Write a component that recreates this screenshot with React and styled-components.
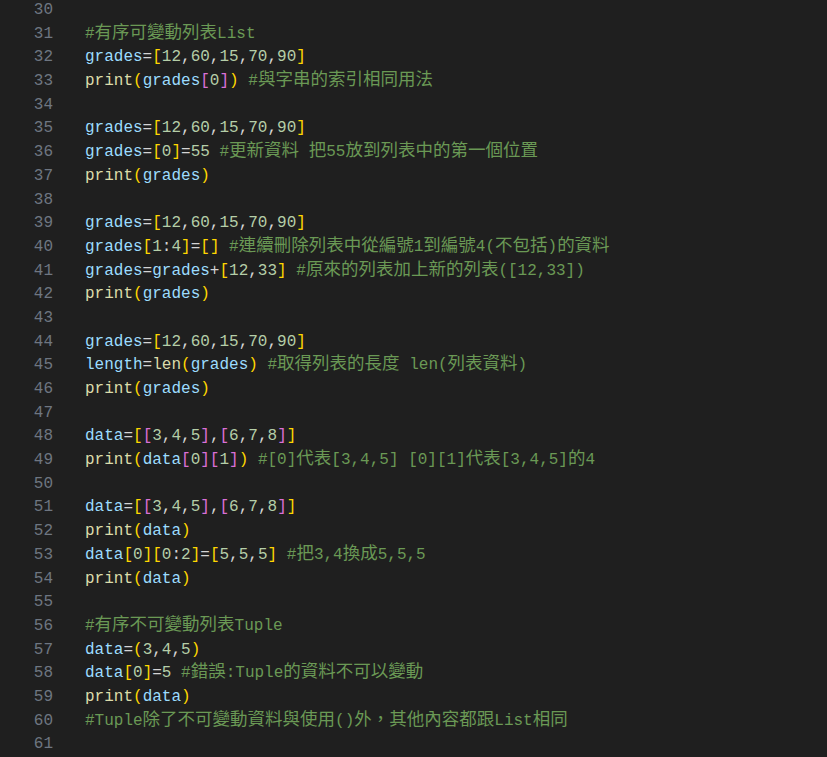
import React from 'react'
import styled, { createGlobalStyle } from 'styled-components'

const GlobalStyle = createGlobalStyle`
    html, body {
        margin: 0;
        padding: 0;
        background: #1f1f1f;
        overflow: hidden;
    }
`

const Editor = styled.div`
    width: 827px;
    height: 757px;
    overflow: hidden;
    background: #1f1f1f;
    font-family: "Liberation Mono", "DejaVu Sans Mono", "Noto Sans CJK TC", monospace;
    font-size: 16px;
`
const Lines = styled.div`
    margin-top: -1px;
    display: flex;
    flex-direction: column;
`
const Row = styled.div`
    display: flex;
    height: 23.7px;
    line-height: 23.7px;
    white-space: pre;
`
const LineNo = styled.span`
    width: 53px;
    flex: none;
    text-align: right;
    color: #6e7681;
`
const Code = styled.span`
    padding-left: 32px;
    color: #d4d4d4;
`
const Token = styled.span`
    color: ${p => p.$color};
`
const Wide = styled.span`
    font-family: "Noto Sans CJK TC", "Noto Sans CJK SC", sans-serif;
    font-size: 17.5px;
    line-height: 0;
`

const colors = {
    v: '#9cdcfe',
    f: '#dcdcaa',
    n: '#b5cea8',
    o: '#d4d4d4',
    c: '#6a9955',
}
const bracketColors = ['#ffd700', '#da70d6', '#179fff']

const source = [
    '',
    '#有序可變動列表List',
    'grades=[12,60,15,70,90]',
    'print(grades[0]) #與字串的索引相同用法',
    '',
    'grades=[12,60,15,70,90]',
    'grades=[0]=55 #更新資料 把55放到列表中的第一個位置',
    'print(grades)',
    '',
    'grades=[12,60,15,70,90]',
    'grades[1:4]=[] #連續刪除列表中從編號1到編號4(不包括)的資料',
    'grades=grades+[12,33] #原來的列表加上新的列表([12,33])',
    'print(grades)',
    '',
    'grades=[12,60,15,70,90]',
    'length=len(grades) #取得列表的長度 len(列表資料)',
    'print(grades)',
    '',
    'data=[[3,4,5],[6,7,8]]',
    'print(data[0][1]) #[0]代表[3,4,5] [0][1]代表[3,4,5]的4',
    '',
    'data=[[3,4,5],[6,7,8]]',
    'print(data)',
    'data[0][0:2]=[5,5,5] #把3,4換成5,5,5',
    'print(data)',
    '',
    '#有序不可變動列表Tuple',
    'data=(3,4,5)',
    'data[0]=5 #錯誤:Tuple的資料不可以變動',
    'print(data)',
    '#Tuple除了不可變動資料與使用()外，其他內容都跟List相同',
    '',
]

// rough python tokenizer, enough for this snippet
const tokenize = line => {
    const out = []
    let depth = 0
    let i = 0
    while (i < line.length) {
        const rest = line.slice(i)
        let m
        if (rest[0] === '#') {
            out.push(['c', rest])
            break
        } else if ((m = rest.match(/^[A-Za-z_]\w*/))) {
            const next = line[i + m[0].length]
            out.push([next === '(' ? 'f' : 'v', m[0]])
            i += m[0].length
        } else if ((m = rest.match(/^\d+/))) {
            out.push(['n', m[0]])
            i += m[0].length
        } else if ('([{'.includes(rest[0])) {
            out.push([bracketColors[depth % 3], rest[0]])
            depth++
            i++
        } else if (')]}'.includes(rest[0])) {
            depth--
            out.push([bracketColors[depth % 3], rest[0]])
            i++
        } else {
            out.push(['o', rest[0]])
            i++
        }
    }
    return out
}

const splitWide = text =>
    text.split(/([\u3000-\u9fff\uff00-\uffef]+)/).map((part, k) =>
        /[\u3000-\u9fff\uff00-\uffef]/.test(part) ? <Wide key={k}>{part}</Wide> : part
    )

const CodeLine = ({ text }) => (
    <Code>
        {tokenize(text).map(([type, value], k) => (
            <Token key={k} $color={colors[type] || type}>
                {type === 'c' ? splitWide(value) : value}
            </Token>
        ))}
    </Code>
)

const App = () => {
    return (
        <Editor>
            <GlobalStyle />
            <Lines>
                {source.map((text, idx) => (
                    <Row key={idx}>
                        <LineNo>{30 + idx}</LineNo>
                        <CodeLine text={text} />
                    </Row>
                ))}
            </Lines>
        </Editor>
    )
}

export default App
